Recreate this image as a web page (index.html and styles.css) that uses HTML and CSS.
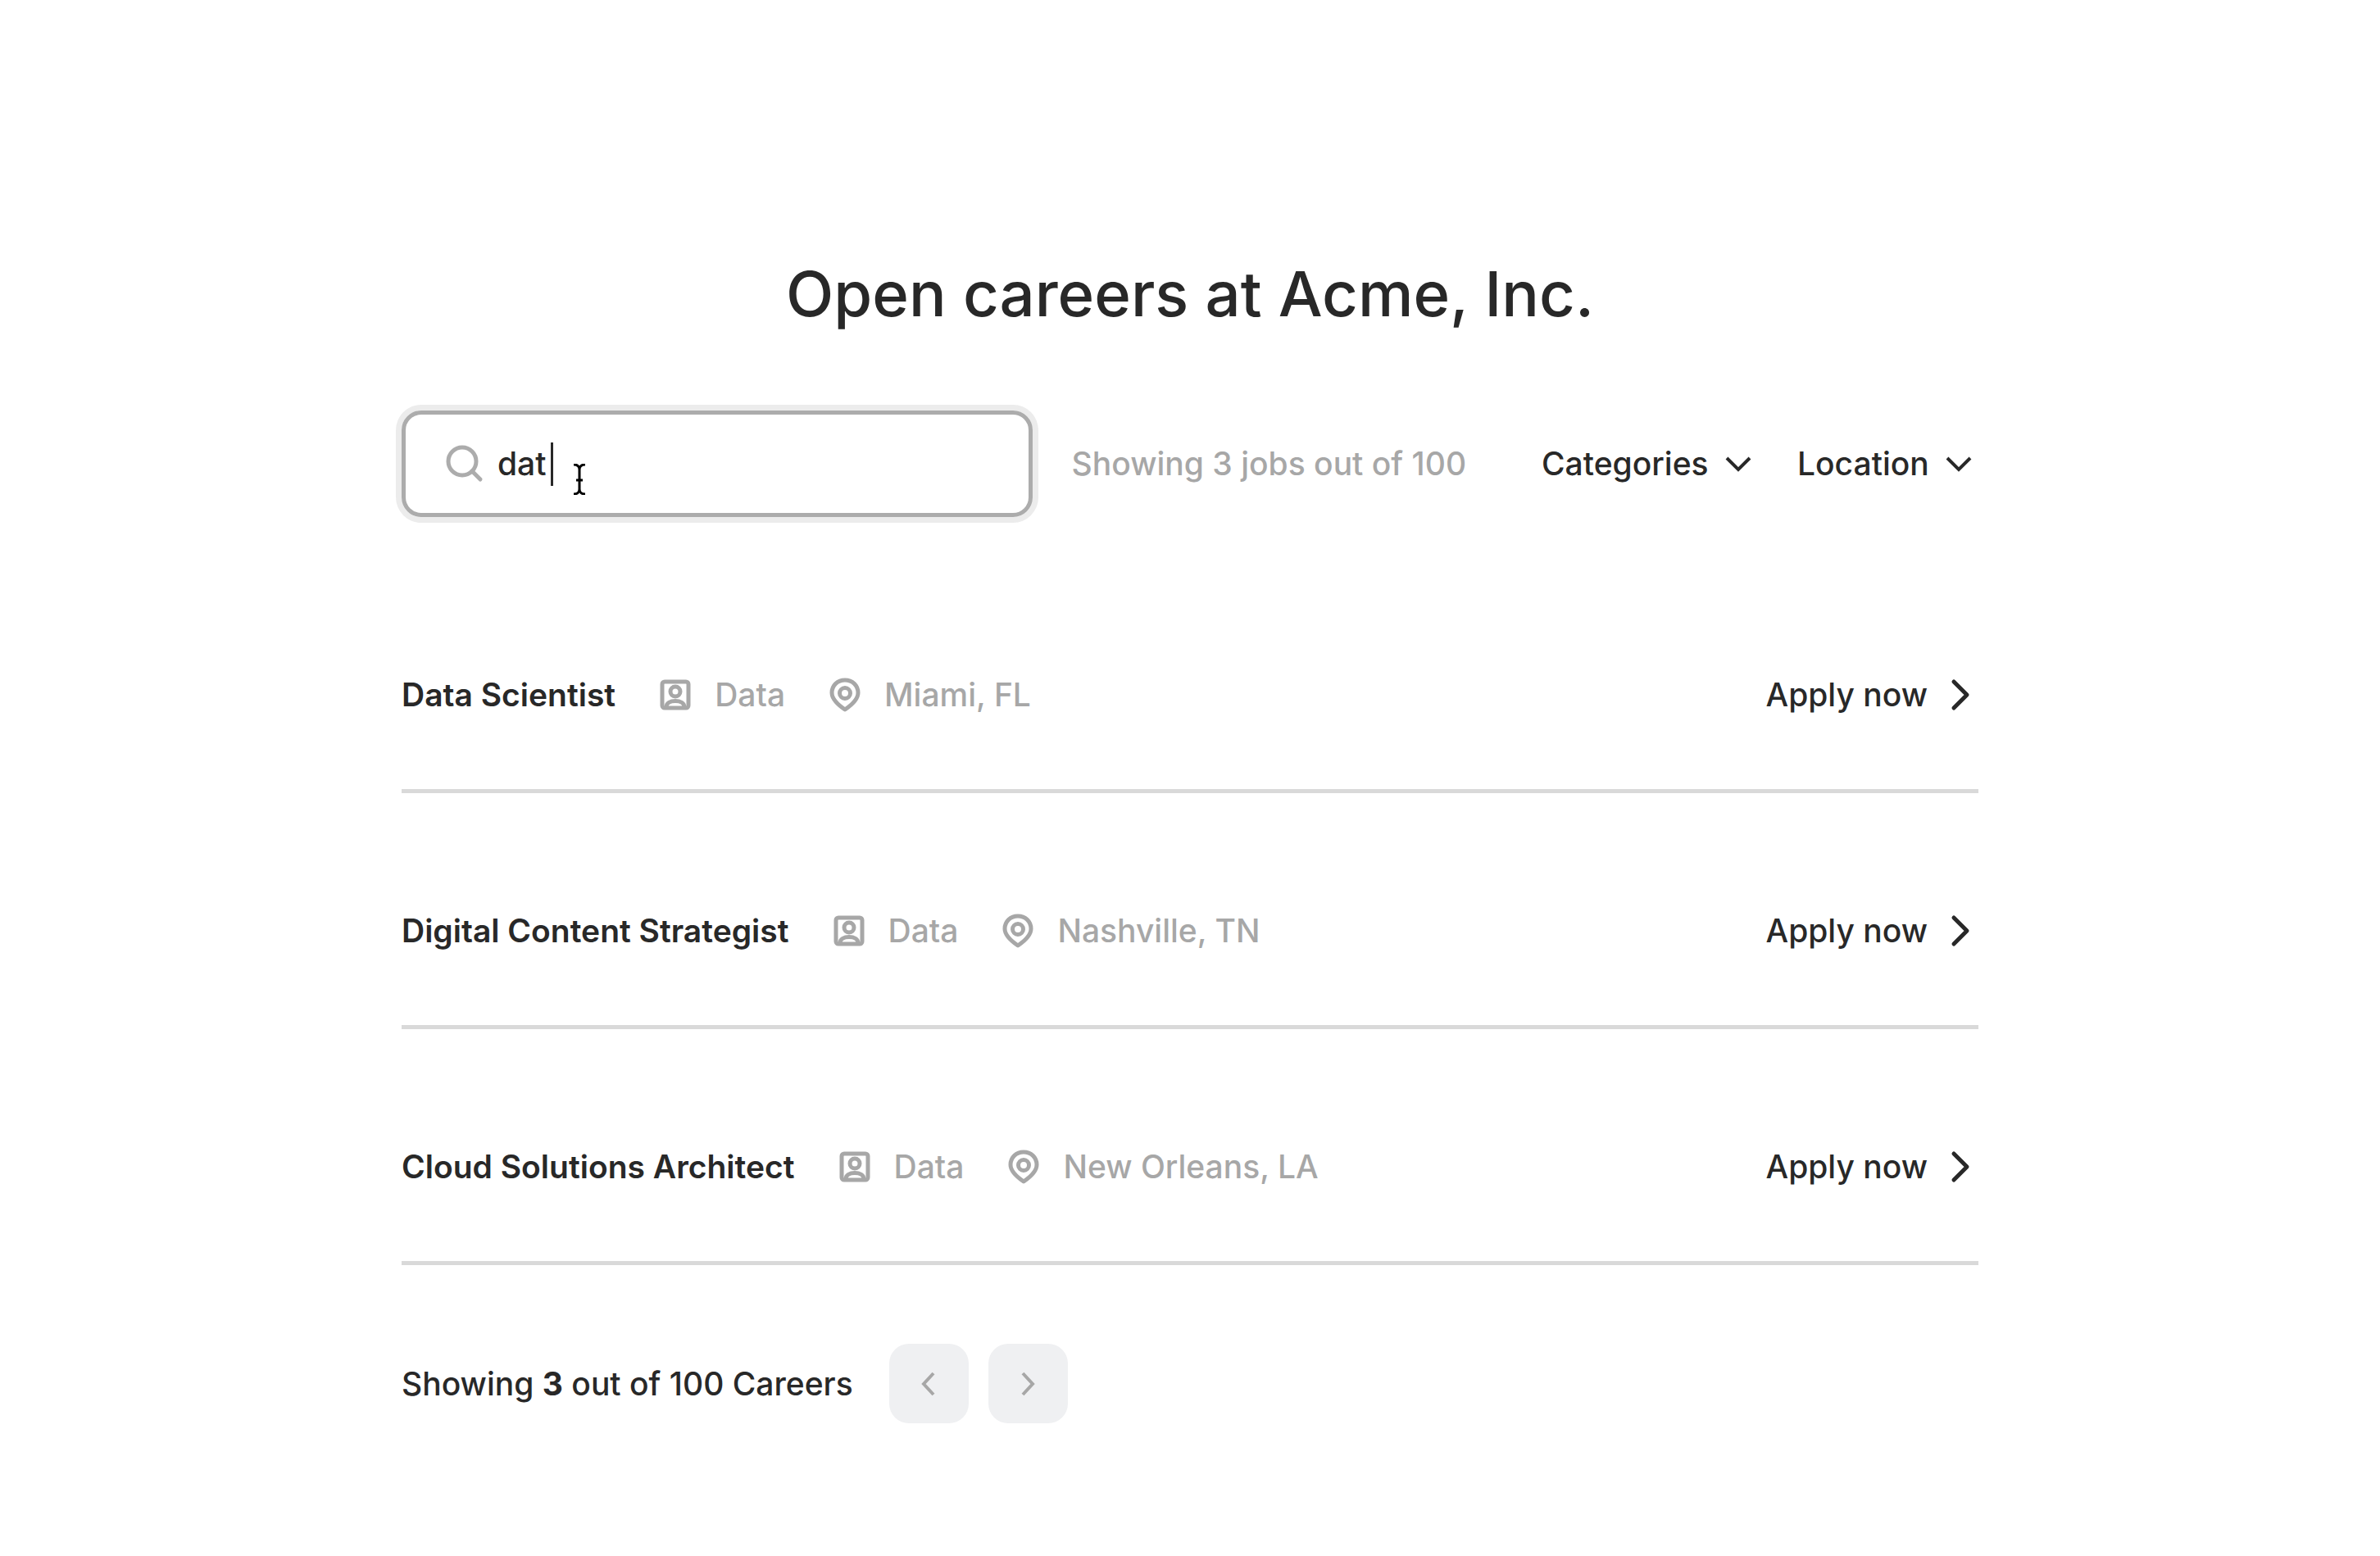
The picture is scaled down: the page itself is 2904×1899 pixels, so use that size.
FILE: index.html
```html
<!DOCTYPE html>
<html lang="en">
<head>
    <meta charset="UTF-8">
    <meta name="viewport" content="width=device-width, initial-scale=1.0">
    <title>Open careers at Acme, Inc.</title>
    <link rel="stylesheet" href="styles.css">
</head>
<body>
    <!-- Shared icons -->
    <svg class="sprite" aria-hidden="true">
        <symbol id="icon-category" viewBox="0 0 48 48">
            <rect x="8" y="8" width="32" height="32" rx="3"/>
            <circle cx="24" cy="20" r="6"/>
            <path d="M13 39c0-5 5-7.500 11-7.500s11 2.500 11 7.500"/>
        </symbol>
        <symbol id="icon-pin" viewBox="0 0 48 48">
            <path d="M24 42C16 36.500 8 30 8 21.500C8 12.500 15 6 24 6S40 12.500 40 21.500C40 30 32 36.500 24 42Z" stroke-linejoin="round"/>
            <circle cx="24" cy="22" r="6.500"/>
        </symbol>
        <symbol id="icon-down" viewBox="0 0 32 20">
            <path d="M2 3l14 14L30 3"/>
        </symbol>
        <symbol id="icon-right" viewBox="0 0 24 40">
            <path d="M4 4l16 16L4 36"/>
        </symbol>
    </svg>

    <main class="careers">
        <h1>Open careers at Acme, Inc.</h1>

        <form class="toolbar">
            <div class="search">
                <svg class="search-icon" viewBox="0 0 48 48" aria-hidden="true">
                    <circle cx="21" cy="21" r="17"/>
                    <path d="M33 33l10 10"/>
                </svg>
                <input type="text" value="dat" aria-label="Search careers">
                <span class="caret"></span>
                <svg class="pointer" viewBox="0 0 16 38" aria-hidden="true">
                    <path d="M1 1c4 0 7 2 7 6v24c0 4-3 6-7 6M15 1c-4 0-7 2-7 6M15 37c-4 0-7-2-7-6M4 20h8"/>
                </svg>
            </div>
            <p class="results">Showing 3 jobs out of 100</p>
            <div class="filters">
                <div class="filter">
                    <select aria-label="Categories"><option>Categories</option></select>
                    <svg aria-hidden="true"><use href="#icon-down"/></svg>
                </div>
                <div class="filter">
                    <select aria-label="Location"><option>Location</option></select>
                    <svg aria-hidden="true"><use href="#icon-down"/></svg>
                </div>
            </div>
        </form>

        <ul class="jobs">
            <li class="job">
                <h2>Data Scientist</h2>
                <span class="meta"><svg aria-hidden="true"><use href="#icon-category"/></svg>Data</span>
                <span class="meta"><svg aria-hidden="true"><use href="#icon-pin"/></svg>Miami, FL</span>
                <a class="apply" href="#">Apply now<svg aria-hidden="true"><use href="#icon-right"/></svg></a>
            </li>
            <li class="job">
                <h2>Digital Content Strategist</h2>
                <span class="meta"><svg aria-hidden="true"><use href="#icon-category"/></svg>Data</span>
                <span class="meta"><svg aria-hidden="true"><use href="#icon-pin"/></svg>Nashville, TN</span>
                <a class="apply" href="#">Apply now<svg aria-hidden="true"><use href="#icon-right"/></svg></a>
            </li>
            <li class="job">
                <h2>Cloud Solutions Architect</h2>
                <span class="meta"><svg aria-hidden="true"><use href="#icon-category"/></svg>Data</span>
                <span class="meta"><svg aria-hidden="true"><use href="#icon-pin"/></svg>New Orleans, LA</span>
                <a class="apply" href="#">Apply now<svg aria-hidden="true"><use href="#icon-right"/></svg></a>
            </li>
        </ul>

        <nav class="pagination" aria-label="Pagination">
            <p>Showing <strong>3</strong> out of 100 Careers</p>
            <div class="pages">
                <button type="button" aria-label="Previous page">
                    <svg viewBox="0 0 18 30" aria-hidden="true"><path d="M15 2L3 15l12 13"/></svg>
                </button>
                <button type="button" aria-label="Next page">
                    <svg viewBox="0 0 18 30" aria-hidden="true"><path d="M3 2l12 13L3 28"/></svg>
                </button>
            </div>
        </nav>
    </main>
</body>
</html>
```
FILE: styles.css
```css
* {
    box-sizing: border-box;
}
body {
    margin: 0;
    background-color: #fff;
    color: #282828;
    font-family: Inter, sans-serif;
    font-size: 39px;
    font-weight: 500;
    line-height: 56px;
}
h1, h2, p, ul {
    margin: 0;
    padding: 0;
}
svg {
    flex: none;
    fill: none;
    stroke: currentColor;
    stroke-width: 5;
}
.sprite {
    position: absolute;
    width: 0;
    height: 0;
}
.careers {
    width: 100%;
    max-width: 1924px;
    margin: 0 auto;
    padding: 312px 0 160px;
}
h1 {
    font-size: 76px;
    font-weight: 500;
    line-height: 93px;
    text-align: center;
}

/* Search and filters */
.toolbar {
    display: flex;
    align-items: center;
    margin-top: 96px;
}
.search {
    position: relative;
    display: flex;
    align-items: center;
    flex: 0 0 40%;
    height: 130px;
    padding-left: 48px;
    border: 5px solid #acacac;
    border-radius: 24px;
    box-shadow: 0 0 0 7px #ececec;
}
.search-icon {
    width: 48px;
    height: 48px;
    color: #acacac;
    stroke-linecap: round;
}
.search input {
    flex: 1;
    min-width: 0;
    margin-left: 16px;
    padding: 0;
    border: 0;
    outline: 0;
    background: none;
    color: inherit;
    font: inherit;
}
.caret {
    position: absolute;
    top: 34px;
    left: 177px;
    width: 3px;
    height: 53px;
    background-color: #282828;
}
.pointer {
    position: absolute;
    top: 60px;
    left: 204px;
    width: 16px;
    height: 38px;
    color: #000;
    stroke-width: 3;
}
.results {
    margin-left: 48px;
    color: #a7a7a7;
}
.filters {
    display: flex;
    gap: 56px;
    margin-left: auto;
    padding-right: 8px;
}
.filter {
    position: relative;
}
.filter select {
    display: block;
    padding: 0 52px 0 0;
    border: 0;
    appearance: none;
    background: none;
    color: inherit;
    font: inherit;
}
.filter svg {
    position: absolute;
    top: 18px;
    right: 0;
    width: 32px;
    height: 20px;
    stroke-width: 4;
    pointer-events: none;
}

/* Job list */
.jobs {
    margin-top: 49px;
    list-style: none;
}
.job {
    display: flex;
    align-items: center;
    height: 288px;
    padding-top: 52px;
    border-bottom: 5px solid #d9d9d9;
}
.job h2 {
    font-size: 39px;
    font-weight: 600;
    line-height: 56px;
}
.meta {
    display: flex;
    align-items: center;
    gap: 24px;
    margin-left: 49px;
    color: #a7a7a7;
}
.meta svg {
    width: 48px;
    height: 48px;
}
.apply {
    display: flex;
    align-items: center;
    gap: 28px;
    margin-left: auto;
    padding-right: 10px;
    color: inherit;
    text-decoration: none;
}
.apply svg {
    width: 24px;
    height: 40px;
    stroke-linecap: round;
    stroke-linejoin: round;
}

/* Pagination */
.pagination {
    display: flex;
    align-items: center;
    gap: 44px;
    margin-top: 96px;
}
.pagination strong {
    font-weight: 700;
}
.pages {
    display: flex;
    gap: 24px;
}
.pages button {
    display: flex;
    align-items: center;
    justify-content: center;
    width: 97px;
    height: 97px;
    padding: 0;
    border: 0;
    border-radius: 24px;
    background-color: #eff0f2;
    color: #a7a7a7;
}
.pages svg {
    width: 18px;
    height: 30px;
    stroke-width: 4;
}
```
